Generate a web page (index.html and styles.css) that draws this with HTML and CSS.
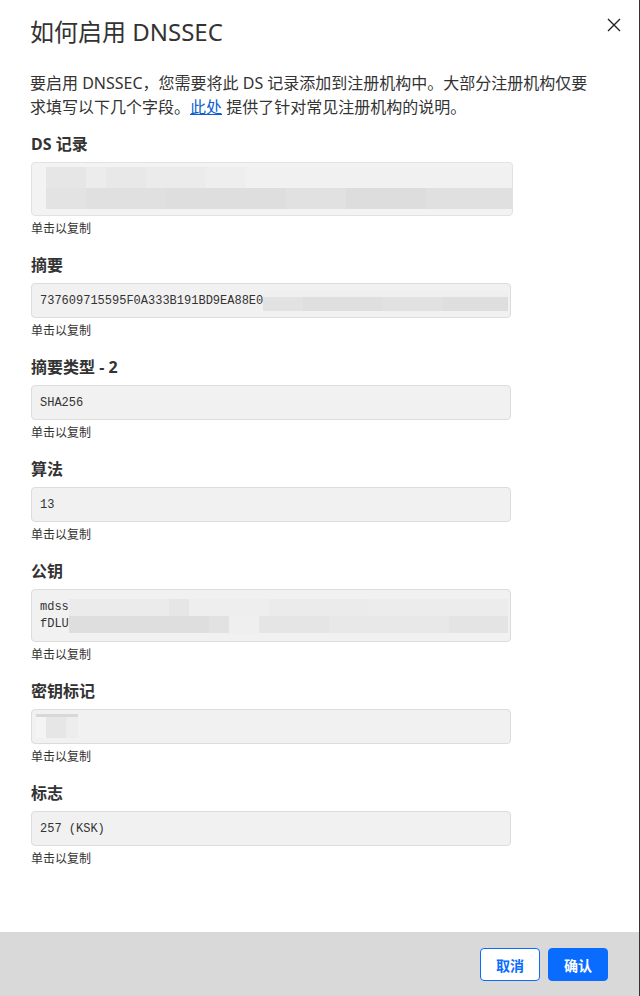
FILE: index.html
```html
<!DOCTYPE html>
<html lang="zh-CN">
<head>
	<meta charset="utf-8">
	<title>如何启用 DNSSEC</title>
	<link rel="stylesheet" href="styles.css">
</head>
<body>
	<div class="dialog">
		<header class="dialog-head">
			<h1>如何启用 DNSSEC</h1>
			<button class="close" aria-label="关闭">
				<svg width="14" height="14" viewBox="0 0 14 14"><path d="M1 1L13 13M13 1L1 13" stroke="#222" stroke-width="1.4" fill="none"/></svg>
			</button>
		</header>
		<main class="dialog-body">
			<p class="intro">要启用 DNSSEC，您需要将此 DS 记录添加到注册机构中。大部分注册机构仅要求填写以下几个字段。<a href="#">此处</a> 提供了针对常见注册机构的说明。</p>

			<section class="field">
				<h3>DS 记录</h3>
				<div class="value value-ds">
					<span class="blur blur-ds-top"></span>
					<span class="blur blur-ds-bottom"></span>
				</div>
				<small>单击以复制</small>
			</section>

			<section class="field">
				<h3>摘要</h3>
				<div class="value"><span class="line">737609715595F0A333B191BD9EA88E0<span class="blur blur-digest"></span></span></div>
				<small>单击以复制</small>
			</section>

			<section class="field">
				<h3>摘要类型 - 2</h3>
				<div class="value">SHA256</div>
				<small>单击以复制</small>
			</section>

			<section class="field">
				<h3>算法</h3>
				<div class="value">13</div>
				<small>单击以复制</small>
			</section>

			<section class="field">
				<h3>公钥</h3>
				<div class="value value-key">
					<span class="line">mdss<span class="blur blur-key1"></span></span>
					<span class="line">fDLU<span class="blur blur-key2"></span></span>
				</div>
				<small>单击以复制</small>
			</section>

			<section class="field">
				<h3>密钥标记</h3>
				<div class="value"><span class="blur blur-tag"></span></div>
				<small>单击以复制</small>
			</section>

			<section class="field">
				<h3>标志</h3>
				<div class="value">257 (KSK)</div>
				<small>单击以复制</small>
			</section>
		</main>
		<footer class="dialog-foot">
			<button class="btn btn-cancel">取消</button>
			<button class="btn btn-ok">确认</button>
		</footer>
	</div>
</body>
</html>
```

FILE: styles.css
```css
/* fonts */
body {
	font-family: "Noto Sans", "Noto Sans CJK SC", sans-serif;
	color: #333;
}

.dialog-head h1 {
	font-size: 24px;
	line-height: 32px;
	font-weight: 400;
}

.intro {
	font-size: 16px;
	line-height: 24px;
}

.field h3 {
	font-size: 16px;
	line-height: 24px;
	font-weight: 700;
}

.value {
	font-family: "Liberation Mono", "Courier New", monospace;
	font-size: 12px;
	line-height: 16px;
}

.value-key {
	line-height: 17px;
}

.field small {
	font-size: 12px;
	line-height: 18px;
}

.btn {
	font-family: "Noto Sans", "Noto Sans CJK SC", sans-serif;
	font-size: 14px;
	font-weight: 700;
}

/* layout */
body {
	margin: 0;
}

.dialog {
	display: flex;
	flex-direction: column;
	width: 639px;
	height: 996px;
}

.dialog-head {
	display: flex;
	justify-content: space-between;
	padding: 16px 18px 0 30px;
}

.dialog-head h1 {
	margin: 0;
}

.close {
	width: 14px;
	height: 14px;
	margin-top: 2px;
	padding: 0;
	border: 0;
	background: none;
	display: flex;
}

.dialog-body {
	flex: 1;
	padding: 0 0 0 31px;
}

.intro {
	width: 566px;
	margin: 23px 0 13px -1px;
}

.field {
	width: 480px;
	margin-bottom: 15px;
}

.field h3 {
	margin: 0 0 6px;
}

.value {
	display: flex;
	flex-direction: column;
	min-height: 16px;
	padding: 9px 8px 8px;
	overflow: hidden;
}

.line {
	display: flex;
	white-space: pre;
}

.field small {
	display: block;
	margin-top: 4px;
}

.blur {
	display: block;
	box-sizing: border-box;
}

.value-ds {
	padding: 4px 0 6px 14px;
	margin-right: -2px;
}

.blur-ds-top,
.blur-ds-bottom {
	height: 21px;
}

.blur-key1,
.blur-key2,
.blur-digest {
	flex: 1;
	height: 17px;
}

.blur-digest {
	height: 20px;
	margin: -2px -6px -2px 0;
}

.blur-key1,
.blur-key2 {
	margin-right: -6px;
}

.blur-tag {
	width: 42px;
	height: 24px;
	margin: -5px 0 -3px -4px;
}

.dialog-foot {
	display: flex;
	justify-content: flex-end;
	gap: 8px;
	padding: 16px 31px 15px;
}

.btn {
	width: 60px;
	height: 33px;
	padding: 0;
}

/* colors */
.dialog {
	background-color: #fff;
	border-right: 1px solid #333;
}

.intro a {
	color: #0b5fd0;
	text-decoration: underline;
}

.value {
	background-color: #f1f1f1;
	border: 1px solid #dcdcdc;
	border-radius: 4px;
}

.value-ds {
	background-color: #f3f3f3;
	border-color: #e2e2e2;
}

.blur-ds-top {
	background: linear-gradient(to right,
		#e6e6e6 0, #e6e6e6 40px, #ececec 40px, #ececec 60px,
		#e8e8e8 60px, #e8e8e8 100px, #ebebeb 100px, #ebebeb 160px,
		#eeeeee 160px, #eeeeee 200px, #f1f1f1 200px);
}

.blur-ds-bottom {
	background: linear-gradient(to right,
		#e3e3e3 0, #e3e3e3 40px, #e0e0e0 40px, #e0e0e0 120px,
		#dedede 120px, #dedede 240px, #e1e1e1 240px, #e1e1e1 300px,
		#dddddd 300px, #dddddd 380px, #e0e0e0 380px);
}

.blur-digest {
	background: linear-gradient(to right,
		#e2e2e2 0, #e2e2e2 40px, #dfdfdf 40px, #dfdfdf 120px,
		#e1e1e1 120px, #e1e1e1 180px, #dedede 180px);
	border-top: 6px solid #efefef;
}

.blur-key1 {
	background: linear-gradient(to right,
		#ebebeb 0, #ebebeb 100px, #e6e6e6 100px, #e6e6e6 120px,
		#eeeeee 120px, #eeeeee 200px, #ebebeb 200px, #ebebeb 300px,
		#ececec 300px);
}

.blur-key2 {
	background: linear-gradient(to right,
		#dedede 0, #dedede 140px, #e2e2e2 140px, #e2e2e2 160px,
		#efefef 160px, #efefef 190px, #e5e5e5 190px, #e5e5e5 260px,
		#e8e8e8 260px, #e8e8e8 380px, #e4e4e4 380px);
}

.blur-tag {
	background: linear-gradient(to bottom, #d8d8d8 0, #d8d8d8 3px, transparent 3px),
		linear-gradient(to right, #f4f4f4 0, #f4f4f4 10px, #e6e6e6 10px, #e6e6e6 30px, #ededed 30px, #ededed 42px);
}

.dialog-foot {
	background-color: #d9d9d9;
}

.btn {
	border-radius: 4px;
}

.btn-cancel {
	background-color: #fff;
	border: 1px solid #0a6cff;
	color: #0a6cff;
}

.btn-ok {
	background-color: #0a6cff;
	border: 1px solid #0a6cff;
	color: #fff;
}
```
